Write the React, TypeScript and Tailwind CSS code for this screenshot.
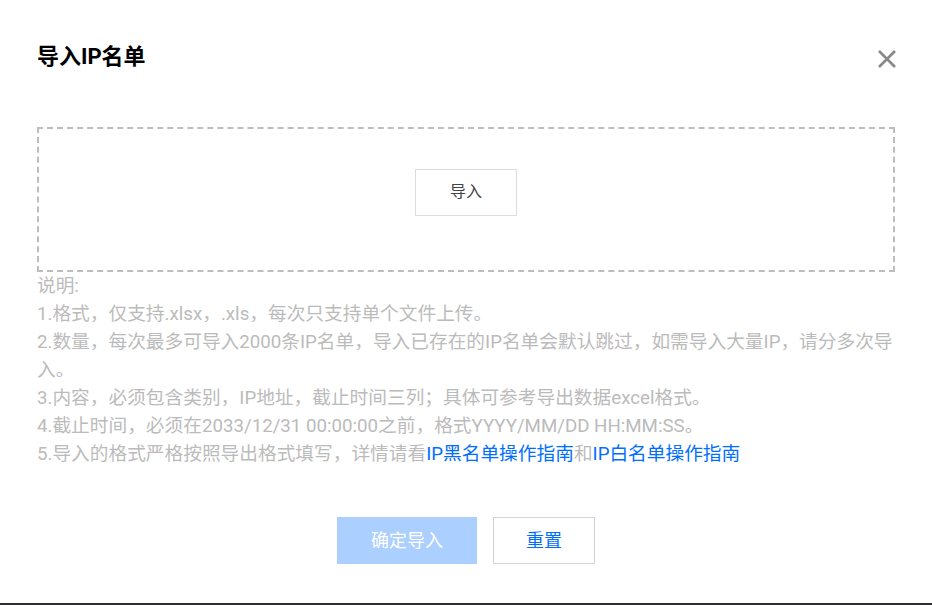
import React from "react";

export default function App() {
  const font = { fontFamily: "Roboto, 'Noto Sans CJK SC', sans-serif" };
  return (
    <div className="w-[932px] h-[605px] flex flex-col bg-white overflow-hidden" style={font}>
      <div className="flex-1 flex flex-col px-[37px]">
        <div className="flex items-center justify-between h-[24px] mt-[44px]">
          <h1 className="text-[22px] font-bold text-[#000] leading-[24px] mt-[2px]">导入IP名单</h1>
          <button className="w-[20px] h-[20px] flex items-center justify-center mr-[-2px] mt-[5px]">
            <svg width="20" height="20" viewBox="0 0 20 20">
              <path d="M2 2 L18 18 M18 2 L2 18" stroke="#888" strokeWidth="2.6" strokeLinecap="butt" />
            </svg>
          </button>
        </div>
        <div className="mt-[59px] h-[145px] border-2 border-dashed border-[#bdbdbd] flex items-center justify-center">
          <button className="w-[102px] h-[47px] border border-[#dcdcdc] text-[16px] text-[#444] bg-white mt-[-15px]">
            导入
          </button>
        </div>
        <div className="text-[18.7px] leading-[28px] text-[#bbbbbb]">
          <p>说明:</p>
          <p>1.格式，仅支持.xlsx，.xls，每次只支持单个文件上传。</p>
          <p>2.数量，每次最多可导入2000条IP名单，导入已存在的IP名单会默认跳过，如需导入大量IP，请分多次导入。</p>
          <p>3.内容，必须包含类别，IP地址，截止时间三列；具体可参考导出数据excel格式。</p>
          <p>4.截止时间，必须在2033/12/31 00:00:00之前，格式YYYY/MM/DD HH:MM:SS。</p>
          <p>
            5.导入的格式严格按照导出格式填写，详情请看
            <span className="text-[#006eff]">IP黑名单操作指南</span>和
            <span className="text-[#006eff]">IP白名单操作指南</span>
          </p>
        </div>
        <div className="mt-[49px] flex justify-center gap-[16px]">
          <button className="w-[140px] h-[47px] bg-[#abcfff] text-white text-[18px]">确定导入</button>
          <button className="w-[102px] h-[47px] border border-[#cfd5de] bg-white text-[#006eff] text-[18px]">重置</button>
        </div>
      </div>
      <div className="h-[2px] bg-[#2e2e31]" />
    </div>
  );
}
